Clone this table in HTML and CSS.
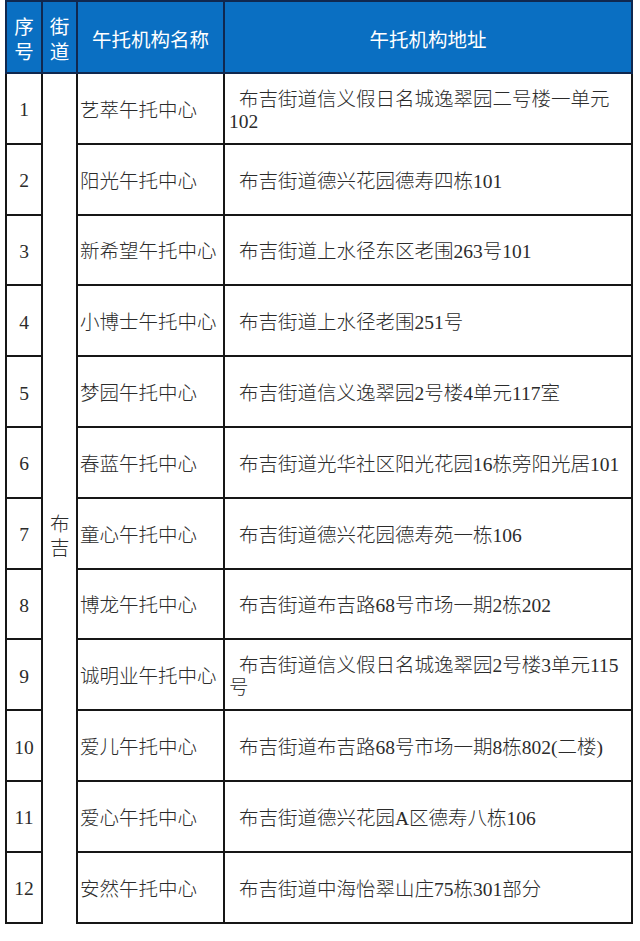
FILE: index.html
```html
<!DOCTYPE html>
<html lang="zh-CN">
<head>
<meta charset="utf-8">
<title>午托机构</title>
<link rel="stylesheet" href="styles.css">
</head>
<body>
<table class="list">
  <colgroup>
    <col class="c-no">
    <col class="c-street">
    <col class="c-name">
    <col class="c-addr">
  </colgroup>
  <thead>
    <tr class="head">
      <th class="h-narrow">序号</th>
      <th class="h-narrow">街道</th>
      <th>午托机构名称</th>
      <th>午托机构地址</th>
    </tr>
  </thead>
  <tbody>
    <tr>
      <td class="no">1</td>
      <td class="street" rowspan="12">布吉</td>
      <td class="name">艺萃午托中心</td>
      <td class="addr">布吉街道信义假日名城逸翠园二号楼一单元<br>102</td>
    </tr>
    <tr><td class="no">2</td><td class="name">阳光午托中心</td><td class="addr">布吉街道德兴花园德寿四栋101</td></tr>
    <tr><td class="no">3</td><td class="name">新希望午托中心</td><td class="addr">布吉街道上水径东区老围263号101</td></tr>
    <tr><td class="no">4</td><td class="name">小博士午托中心</td><td class="addr">布吉街道上水径老围251号</td></tr>
    <tr><td class="no">5</td><td class="name">梦园午托中心</td><td class="addr">布吉街道信义逸翠园2号楼4单元117室</td></tr>
    <tr><td class="no">6</td><td class="name">春蓝午托中心</td><td class="addr">布吉街道光华社区阳光花园16栋旁阳光居101</td></tr>
    <tr><td class="no">7</td><td class="name">童心午托中心</td><td class="addr">布吉街道德兴花园德寿苑一栋106</td></tr>
    <tr><td class="no">8</td><td class="name">博龙午托中心</td><td class="addr">布吉街道布吉路68号市场一期2栋202</td></tr>
    <tr><td class="no">9</td><td class="name">诚明业午托中心</td><td class="addr">布吉街道信义假日名城逸翠园2号楼3单元115<br>号</td></tr>
    <tr><td class="no">10</td><td class="name">爱儿午托中心</td><td class="addr">布吉街道布吉路68号市场一期8栋802(二楼)</td></tr>
    <tr><td class="no">11</td><td class="name">爱心午托中心</td><td class="addr">布吉街道德兴花园A区德寿八栋106</td></tr>
    <tr><td class="no">12</td><td class="name">安然午托中心</td><td class="addr">布吉街道中海怡翠山庄75栋301部分</td></tr>
  </tbody>
</table>
</body>
</html>
```

FILE: styles.css
```css
html, body {
  margin: 0;
  padding: 0;
  background: #ffffff;
}

.list {
  margin: 0 0 0 5px;
  width: 626px;
  table-layout: fixed;
  border-collapse: collapse;
  font-family: "Liberation Serif", "Noto Sans CJK SC", serif;
  font-size: 19.5px;
  font-weight: 300;
  color: #2b2b2b;
}

.c-no { width: 36px; }
.c-street { width: 35px; }
.c-name { width: 147px; }
.c-addr { width: 408px; }

.head {
  height: 72px;
}

.list .head th {
  background: #0a6fc2;
  color: #ffffff;
  font-family: "Noto Sans CJK SC", sans-serif;
  font-weight: 400;
  font-size: 19.5px;
  line-height: 25px;
  border: 2px solid #10284f;
  padding: 2px 0 0;
  text-align: center;
  vertical-align: middle;
}

.list .head th.h-narrow {
  padding: 2px 6px 0;
}

.list tbody tr {
  height: 70.8px;
}

.list td {
  border: 2px solid #161616;
  padding: 5px 0 0;
  vertical-align: middle;
  line-height: 22px;
}

.list td.no {
  text-align: center;
  padding-top: 4px;
}

.list td.street {
  text-align: center;
  padding: 78px 7px 0;
  line-height: 24px;
  border-bottom-style: hidden;
}

.list td.name {
  padding-left: 2px;
  white-space: nowrap;
}

.list td.addr {
  padding-left: 4px;
  text-indent: 10px;
  white-space: nowrap;
}
```
